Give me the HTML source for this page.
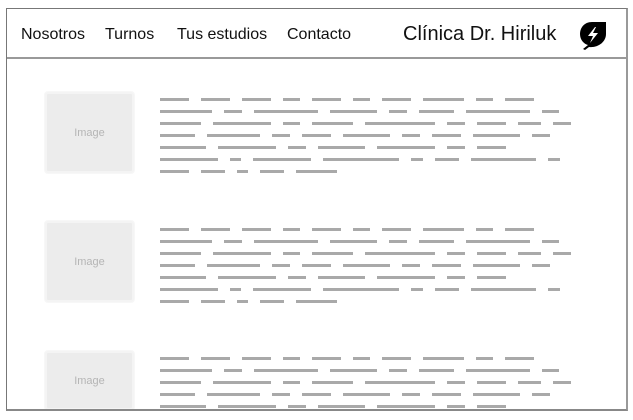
<!DOCTYPE html>
<html><head><meta charset="utf-8"><style>
*{margin:0;padding:0;box-sizing:border-box}
body{width:633px;height:420px;background:#fff;position:relative;overflow:hidden;font-family:"Liberation Sans",sans-serif}
.frame{position:absolute;left:6px;top:8px;width:622px;height:403px;border:1px solid #777;border-bottom:2px solid #888;border-right:2px solid #999;overflow:hidden}
.hdr{position:absolute;left:0;top:0;width:100%;height:50px;border-bottom:2px solid #999}
.nav{position:absolute;top:17px;font-size:16px;color:#111}
.title{position:absolute;left:396px;top:14px;font-size:20px;color:#111}
.img{position:absolute;left:38px;width:89px;height:81px;border:2px solid #f4f4f4;border-radius:3px;background:#ececec;color:#b5b5b5;font-size:11px;display:flex;align-items:center;justify-content:center;box-shadow:0 0 0 1px #f7f7f7}
.bar{position:absolute;height:3px;background:#a9a9a9}
</style></head><body>
<div class="frame">
<div class="hdr">
<span class="nav" style="left:14px">Nosotros</span>
<span class="nav" style="left:98px">Turnos</span>
<span class="nav" style="left:170px">Tus estudios</span>
<span class="nav" style="left:280px">Contacto</span>
<span class="title">Clínica Dr. Hiriluk</span>
<svg style="position:absolute;left:571px;top:11px" width="30" height="30" viewBox="0 0 30 30">
<path d="M28 2 L14 2 C6 2 2 8 2 14 C2 20 6 24 10 25 L5 29 L7 30 L11 27 C20 28 28 22 28 14 Z" fill="#000"/>
<path d="M17 7 L10 16 L15 16 L12 23 L20 13 L15 13 L18 7 Z" fill="#fff"/>
</svg>
</div>
<div class="img" style="top:83px">Image</div>
<div class="img" style="top:212px">Image</div>
<div class="img" style="top:342px;height:59px">Image</div>
<div id="t"></div>
</div>
<script>
var L=[[29,29,29,17,29,17,29,41,17,29],[52,18,64,47,18,35,64,17],[41,58,17,41,70,18,29,23,18],[35,53,18,29,47,18,29,47,18],[46,58,18,47,58,18,29],[58,11,58,76,12,24,65,12],[29,24,11,24,41]];
var h='';
[89,219,348].forEach(function(y0){
 L.forEach(function(ws,i){var x=153,y=y0+i*12;ws.forEach(function(w){h+='<div class="bar" style="left:'+x+'px;top:'+y+'px;width:'+w+'px"></div>';x+=w+12;});});
});
document.getElementById('t').innerHTML=h;
</script>
</body></html>
